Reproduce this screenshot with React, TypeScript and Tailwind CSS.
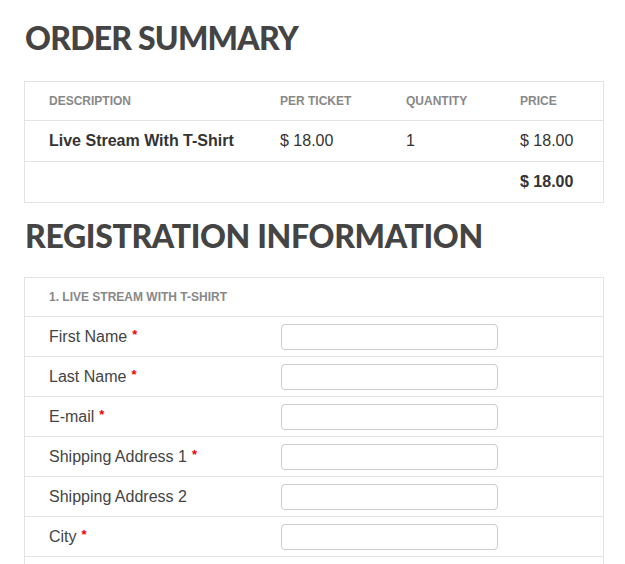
import React from "react";

const heading = "font-['Lato',sans-serif] font-black text-[#444] uppercase leading-none";
const sans = "font-['Liberation_Sans',Arial,sans-serif]";

const fields: { label: string; required: boolean }[] = [
  { label: "First Name", required: true },
  { label: "Last Name", required: true },
  { label: "E-mail", required: true },
  { label: "Shipping Address 1", required: true },
  { label: "Shipping Address 2", required: false },
  { label: "City", required: true },
  { label: "State", required: true },
];

export default function App() {
  return (
    <div className={`w-[625px] h-[564px] overflow-hidden bg-white pl-6 pr-[21px] ${sans}`}>
      <h1 className={`${heading} text-[32px] tracking-[-0.8px] pt-[22px] pl-[1px] h-[81px]`}>Order Summary</h1>
      <div className="border border-[#e3e3e3]">
        <div className="grid grid-cols-[231px_126px_114px_1fr] pl-6 h-[39px] items-center border-b border-[#e3e3e3] text-[12px] font-bold text-[#888] uppercase">
          <div>Description</div>
          <div>Per Ticket</div>
          <div>Quantity</div>
          <div>Price</div>
        </div>
        <div className="grid grid-cols-[231px_126px_114px_1fr] pl-6 h-[41px] items-center border-b border-[#e3e3e3] text-[16px] text-[#333]">
          <div className="font-bold">Live Stream With T-Shirt</div>
          <div>$ 18.00</div>
          <div>1</div>
          <div>$ 18.00</div>
        </div>
        <div className="grid grid-cols-[231px_126px_114px_1fr] pl-6 h-[40px] items-center text-[16px] text-[#333] font-bold">
          <div />
          <div />
          <div />
          <div>$ 18.00</div>
        </div>
      </div>
      <h2 className={`${heading} text-[32px] tracking-[-0.35px] pt-[17px] pl-[1px] h-[74px]`}>Registration Information</h2>
      <div className="border border-[#e3e3e3]">
        <div className="pl-6 h-[39px] flex items-center border-b border-[#e3e3e3] text-[12px] font-bold text-[#888] uppercase">
          1. Live Stream With T-Shirt
        </div>
        {fields.map((f) => (
          <div
            key={f.label}
            className="grid grid-cols-[232px_217px] pl-6 h-[40px] items-center border-b border-[#e3e3e3] text-[16px] text-[#444]"
          >
            <div>
              {f.label}
              {f.required && <span className="text-[#e00] font-bold text-[13px] ml-[5px] align-top">*</span>}
            </div>
            <input type="text" className="h-[26px] w-[217px] border border-[#cccccc] rounded-[4px] bg-white" />
          </div>
        ))}
      </div>
    </div>
  );
}
